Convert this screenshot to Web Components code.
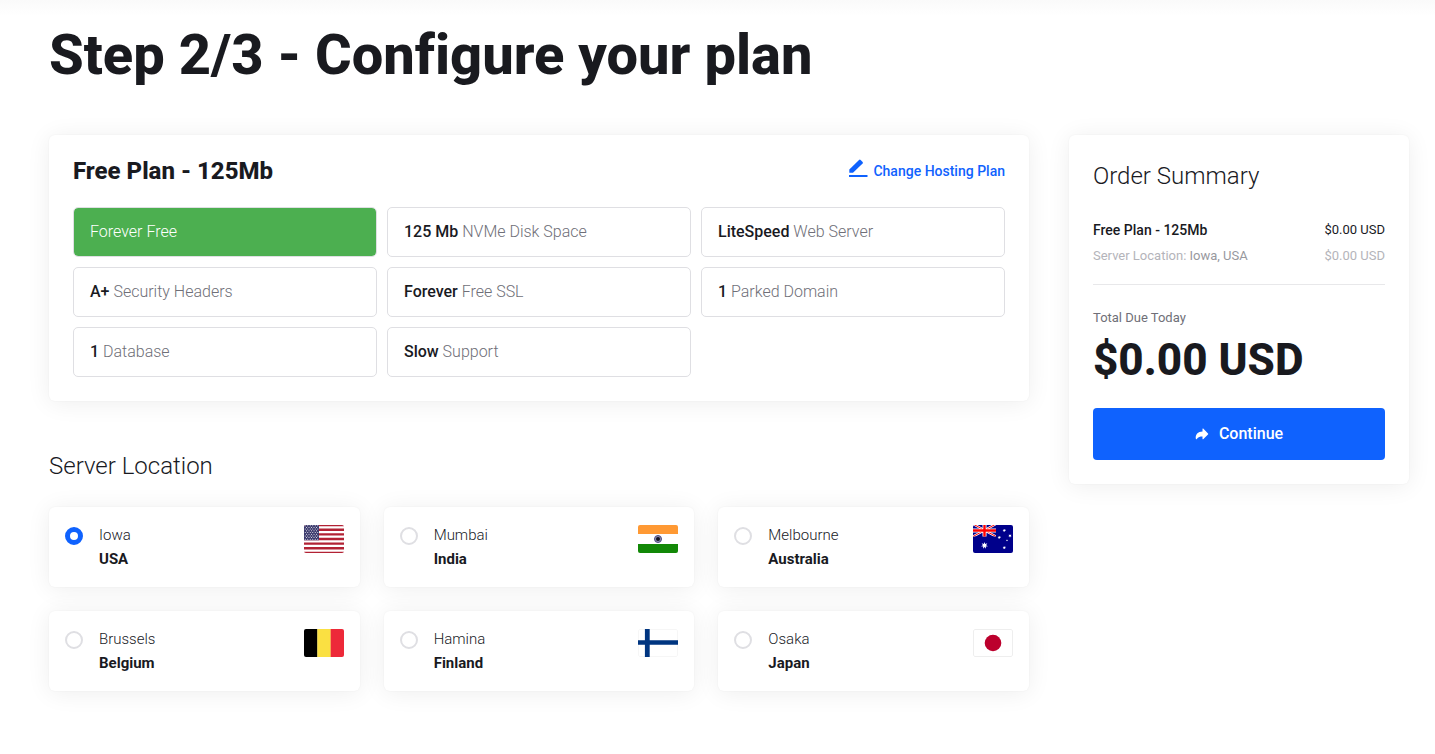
<!DOCTYPE html>
<html lang="en">
<head>
<meta charset="utf-8">
<meta name="viewport" content="width=device-width, initial-scale=1">
<title>Configure your plan</title>
<style>
    :root {
        --ink:#191a1f; --muted:#6f6f78; --faint:#b4b4ba; --line:#dfdfe3; --brand:#0f62fe; --green:#4caf50;
    }
    body {
        margin:0;
        font-family:Roboto, "Liberation Sans", sans-serif; color:var(--ink);
        font-variant-ligatures:none;
        background:linear-gradient(#fafafa, #fff 16px) no-repeat #fff;
    }
</style>
</head>
<body>
<checkout-page>
    <h1 slot="title">Step 2/3 - Configure your plan</h1>
    <plan-card>
        <h2 slot="name">Free Plan - 125Mb</h2>
        <plan-feature highlight>Forever Free</plan-feature>
        <plan-feature><b slot="value">125 Mb</b> NVMe Disk Space</plan-feature>
        <plan-feature><b slot="value">LiteSpeed</b> Web Server</plan-feature>
        <plan-feature><b slot="value">A+</b> Security Headers</plan-feature>
        <plan-feature><b slot="value">Forever</b> Free SSL</plan-feature>
        <plan-feature><b slot="value">1</b> Parked Domain</plan-feature>
        <plan-feature><b slot="value">1</b> Database</plan-feature>
        <plan-feature><b slot="value">Slow</b> Support</plan-feature>
    </plan-card>
    <location-picker>Server Location</location-picker>
    <order-summary slot="aside" plan="Free Plan - 125Mb" price="$0.00 USD">Order Summary</order-summary>
</checkout-page>
<script>
const base = `*,*::before,*::after {box-sizing:border-box;}
    h2,p,dl,dd,fieldset {margin:0; padding:0; border:0;}`;
const surface = `background:#fff; border-radius:6px; box-shadow:0 2px 24px rgba(0,0,0,.07), 0 0 2px rgba(0,0,0,.05);`;

class Base extends HTMLElement {
    constructor() {
        super();
        this.attachShadow({ mode: 'open' });
    }
    connectedCallback() {
        this.shadowRoot.innerHTML = `<style>${base}${this.css}</style>${this.html}`;
    }
}

customElements.define('checkout-page', class extends Base {
    get css() {
        return `
        :host {display:block; padding:23px 26px 63px 49px;}
        ::slotted(h1) {margin:0 0 48px; font-size:56px; line-height:64px; font-weight:800;}
        .columns {display:grid; grid-template-columns:minmax(0,1fr) 340px; gap:40px; align-items:start;}
        main {display:grid; gap:48px;}
        @media (max-width:900px) {.columns {grid-template-columns:minmax(0,1fr);}}`;
    }
    get html() {
        return `<slot name="title"></slot>
        <div class="columns"><main><slot></slot></main><aside><slot name="aside"></slot></aside></div>`;
    }
});

customElements.define('plan-card', class extends Base {
    get css() {
        return `
        :host {display:block; padding:24px; ${surface}}
        header {display:flex; justify-content:space-between; align-items:center; margin-bottom:24px;}
        ::slotted(h2) {margin:0; font-size:24px; line-height:24px; font-weight:800;}
        a {
            display:flex; align-items:center; gap:5px;
            color:var(--brand); font-size:14px; line-height:24px; font-weight:500; text-decoration:none;
        }
        svg {width:20px; height:24px; fill:currentColor;}
        .grid {display:grid; grid-template-columns:repeat(3,minmax(0,1fr)); gap:10px;}`;
    }
    get html() {
        return `<header>
            <slot name="name"></slot>
            <a href="#plans"><svg viewBox="0 0 20 24" aria-hidden="true"><path d="M1 16h18.500v2H1z"/><path d="M1.300 13.700v-3.300L11 .900q.8-.7 1.600 0l2 2q.7.800 0 1.500L5 13.700z"/></svg>Change Hosting Plan</a>
        </header>
        <div class="grid"><slot></slot></div>`;
    }
});

customElements.define('plan-feature', class extends Base {
    get css() {
        return `
        :host {
            display:block; padding:12px 16px;
            border:1px solid var(--line); border-radius:5px;
            color:var(--muted); font-size:16px; line-height:24px; font-weight:300;
        }
        :host([highlight]) {background:var(--green); background-clip:padding-box; color:#fff;}
        ::slotted(b) {color:var(--ink); font-weight:500;}`;
    }
    get html() {
        return `<slot name="value"></slot><slot></slot>`;
    }
});

customElements.define('country-flag', class extends Base {
    static star = (x, y, r, n = 7) => {
        const points = [...Array(n * 2).keys()].map(i => {
            const [a, d] = [Math.PI * i / n - Math.PI / 2, i % 2 ? r * .45 : r];
            return `${x + d * Math.cos(a)},${y + d * Math.sin(a)}`;
        });
        return `<polygon fill="#fff" points="${points.join(' ')}"/>`;
    };
    get art() {
        const star = this.constructor.star;
        const rows = [...Array(7).keys()];
        return {
            us: `<path fill="#fff" d="M0 0h40v28H0z"/>
                ${rows.map(i => `<path fill="#b22234" d="M0 ${i * 30 / 6.5 - 1}h40v${30 / 13}H0z"/>`).join('')}
                <path fill="#3c3b6e" d="M0 0h15v15.150H0z"/>
                ${[...Array(9).keys()].map(r => [...Array(r % 2 ? 5 : 6).keys()].map(c =>
                    `<circle fill="#fff" r=".5" cx="${(r % 2 ? 2.5 : 1.25) + c * 2.5}" cy="${.7 + r * 1.7}"/>`).join('')).join('')}`,
            in: `<path fill="#fff" d="M0 0h40v28H0z"/><path fill="#f93" d="M0 0h40v9H0z"/><path fill="#128807" d="M0 19h40v9H0z"/>
                <circle cx="20" cy="14" r="3.500" fill="#8f8fb0" stroke="#4a4a80"/><circle cx="20" cy="14" r="2" fill="#111122"/>`,
            au: `<path fill="#00008b" d="M0 0h40v28H0z"/>
                <svg width="23" height="11.500" viewBox="0 1 23 11.500">
                    <path stroke="#fff" stroke-width="2.400" d="M0 0l23 12.500M23 0L0 12.500"/>
                    <path stroke="#f00" stroke-width="1" d="M0 0l23 12.500M23 0L0 12.500"/>
                    <path stroke="#fff" stroke-width="4" d="M11.500 0v13M0 6.500h23"/>
                    <path stroke="#f00" stroke-width="2.400" d="M11.500 0v13M0 6.500h23"/>
                </svg>
                ${star(11.5, 20.5, 3.6)}${star(31.3, 5.5, 1.8)}${star(26.3, 12.5, 1.8)}${star(37, 10.8, 1.8)}${star(31.3, 22.7, 1.8)}${star(34, 15.3, 1.1, 5)}`,
            be: `<path d="M0 0h13.500v28H0z"/><path fill="#fae042" d="M13.330 0h13.500v28h-13.500z"/><path fill="#ed2939" d="M26.670 0H40v28H26.670z"/>`,
            fi: `<rect x=".5" y=".5" width="39" height="27" rx="1.500" fill="#fff" stroke="#f6f6f6"/><path fill="#003580" d="M6.900 0h4.800v28H6.900zM0 11.200h40v4.500H0z"/>`,
            jp: `<rect x=".5" y=".5" width="39" height="27" rx="1.500" fill="#fff" stroke="#eee"/><circle cx="20" cy="14" r="8.300" fill="#bc002d"/>`
        }[this.getAttribute('code')];
    }
    get css() {
        return `
        :host {display:block; width:40px; height:28px; border-radius:2px; overflow:hidden;}
        svg {display:block;}`;
    }
    get html() {
        return `<svg width="40" height="28" viewBox="0 0 40 28" aria-hidden="true">${this.art}</svg>`;
    }
});

customElements.define('location-picker', class extends Base {
    locations = [
        ['us', 'Iowa', 'USA'],
        ['in', 'Mumbai', 'India'],
        ['au', 'Melbourne', 'Australia'],
        ['be', 'Brussels', 'Belgium'],
        ['fi', 'Hamina', 'Finland'],
        ['jp', 'Osaka', 'Japan']
    ];
    get css() {
        return `
        :host {display:block;}
        h2 {margin-bottom:24px; font-size:24px; line-height:34px; font-weight:300;}
        fieldset {display:grid; grid-template-columns:repeat(3,minmax(0,1fr)); gap:24px; min-width:0;}
        label {
            display:flex; align-items:flex-start; gap:16px;
            padding:16px; ${surface} cursor:pointer;
            font-size:15px; line-height:24px;
        }
        input {
            appearance:none; flex:none;
            width:18px; height:18px; margin:4px 0 0;
            border:2px solid var(--line); border-radius:50%; background:#fff;
        }
        input:checked {border:5px solid var(--brand);}
        span {flex:1; font-weight:300;}
        b {display:block; font-weight:700;}
        country-flag {margin-top:2px;}`;
    }
    get html() {
        return `<h2 id="heading"><slot></slot></h2>
        <fieldset aria-labelledby="heading">${this.locations.map(([code, city, country], i) => `
            <label for="${code}">
                <input type="radio" name="location" id="${code}" value="${code}" ${i ? '' : 'checked'}>
                <span>${city}<b>${country}</b></span>
                <country-flag code="${code}"></country-flag>
            </label>`).join('')}
        </fieldset>`;
    }
});

customElements.define('order-summary', class extends Base {
    get css() {
        return `
        :host {display:block; padding:24px; ${surface}}
        h2 {margin-bottom:24px; font-size:24px; line-height:34px; font-weight:300;}
        dl {padding-bottom:15px; border-bottom:1px solid #e8e8ea;}
        dl div {display:flex; justify-content:space-between; font-size:13px; line-height:26px;}
        dt.plan {font-size:14px; font-weight:500;}
        .extra {color:var(--faint);}
        .extra span {color:#98989e;}
        p {margin-top:21px; color:var(--muted); font-size:13px; line-height:24px;}
        strong {display:block; margin:4px 0 22px; font-size:44px; line-height:52px; font-weight:800;}
        button {
            display:flex; align-items:center; justify-content:center; gap:10px;
            width:100%; padding:14px; border:0; border-radius:4px;
            background:var(--brand); color:#fff; cursor:pointer;
            font:500 16px/24px Roboto, "Liberation Sans", sans-serif;
        }
        svg {width:14px; height:14px; fill:currentColor;}`;
    }
    get html() {
        const price = this.getAttribute('price');
        return `<h2><slot></slot></h2>
        <dl>
            <div><dt class="plan">${this.getAttribute('plan')}</dt><dd>${price}</dd></div>
            <div class="extra"><dt>Server Location: <span>Iowa, USA</span></dt><dd>${price}</dd></div>
        </dl>
        <p>Total Due Today</p>
        <strong>${price}</strong>
        <button type="button"><svg viewBox="0 0 14 14" aria-hidden="true"><path d="M7.500 1.800q.2-.5.700-.2L13 6.400q.500.600 0 1.200l-4.800 4.600q-.6.400-.7-.3V9.400C5 9.400 3.200 9.600 1.800 12q-.5.700-.9 0C0 7.500 3 4.600 7.500 4.500z"/></svg>Continue</button>`;
    }
});
</script>
</body>
</html>
